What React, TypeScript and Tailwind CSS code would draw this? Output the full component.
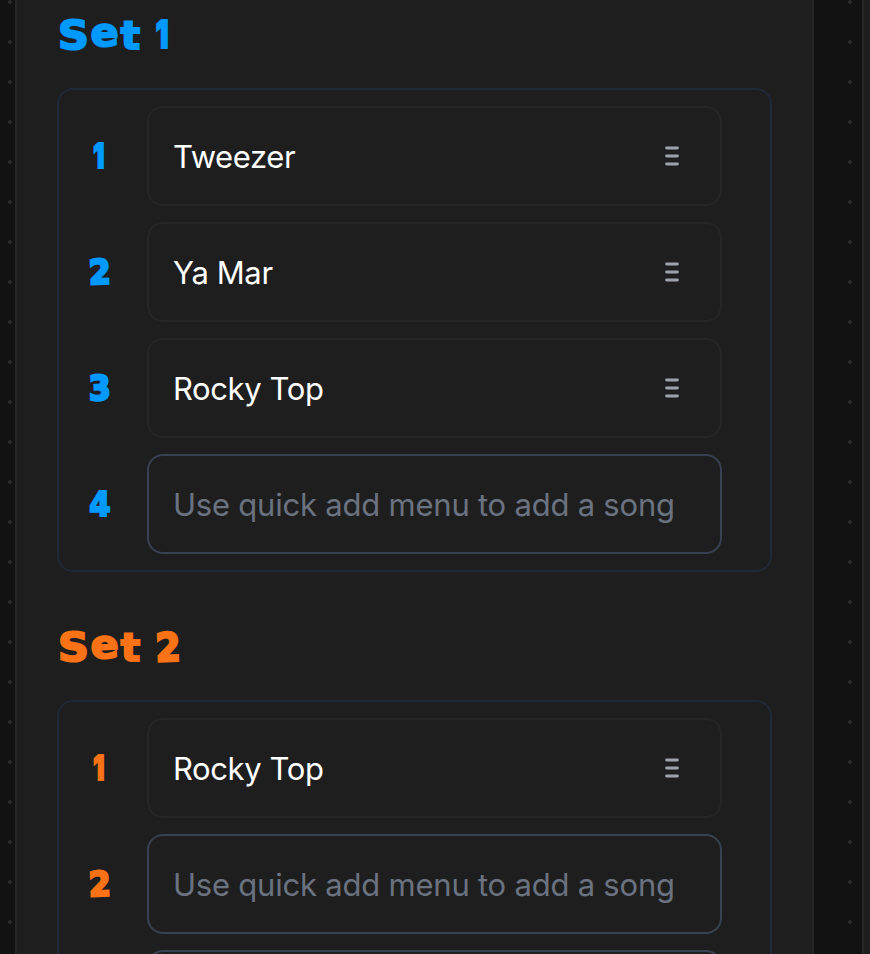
import type { ReactNode } from "react";

const GLYPHS: Record<string, string> = {
  S: "w-[31px] scale-x-[1.1] translate-y-px",
  e: "w-[29px] scale-x-[1.06] -translate-y-[2px] -rotate-2",
  t: "w-[21px] scale-x-[1.04] translate-y-px",
};

const DIGITS: Record<string, string> = {
  "1": "font-[Inter,sans-serif] font-black scale-x-[.72] [-webkit-text-stroke:2px_currentColor]",
  "2": "font-['DejaVu_Sans',sans-serif] font-bold scale-x-[.92] -rotate-2 [-webkit-text-stroke:2.6px_currentColor]",
  "3": "font-['DejaVu_Sans',sans-serif] font-bold scale-x-[.92] -rotate-2 [-webkit-text-stroke:2.6px_currentColor]",
  "4": "font-['DejaVu_Sans',sans-serif] font-bold scale-x-[.9] [-webkit-text-stroke:2.2px_currentColor]",
};

function Heading({ n, color }: { n: string; color: string }) {
  return (
    <h2 aria-label={`Set ${n}`} className={`flex h-[50px] items-center pl-px font-['DejaVu_Sans',sans-serif] text-[39px] leading-[50px] font-bold [-webkit-text-stroke:2px_currentColor] ${color}`}>
      {["S", "e", "t"].map((c) => (
        <span key={c} className={`mr-px flex shrink-0 justify-center ${GLYPHS[c]}`}>{c}</span>
      ))}
      <span className={`flex w-6 justify-center text-[39px] ${n === "1" ? "ml-2 -translate-y-px" : "ml-[14px] translate-y-px"} ${DIGITS[n]}`}>{n}</span>
    </h2>
  );
}

function Row({ n, song, color }: { n: string; song?: string; color: string }) {
  return (
    <div className="flex h-[100px] shrink-0 items-center">
      <div className={`flex w-20 shrink-0 justify-center text-[34px] leading-[48px] ${n === "1" ? "" : "pl-px"} ${color}`}>
        <span className={`inline-block ${DIGITS[n]}`}>{n}</span>
      </div>
      <div className={`ml-2 flex h-[100px] w-[575px] items-center justify-between rounded-2xl border-2 pl-6 pr-10 font-[Inter,sans-serif] text-[31px] ${song ? "border-[#262626] tracking-[-0.4px] text-white" : "border-[#374151] tracking-[-0.22px] text-[#6b7280]"}`}>
        <span className="whitespace-nowrap pt-[3px]">{song ?? "Use quick add menu to add a song"}</span>
        {song && (
          <svg width="16" height="24" viewBox="0 0 16 24" className="shrink-0" stroke="#9ca3af" strokeWidth="2.8" strokeLinecap="round">
            <path d="M2.5 4h11M2.5 12h11M2.5 20h11" />
          </svg>
        )}
      </div>
    </div>
  );
}

function SetList({ n, songs, color, className, children }: { n: string; songs: (string | undefined)[]; color: string; className: string; children?: ReactNode }) {
  return (
    <section className={`flex flex-col gap-7 ${className}`}>
      <Heading n={n} color={color} />
      <div className="flex w-[715px] flex-col gap-4 rounded-2xl border-2 border-[#1f2937] py-4">
        {songs.map((s, i) => (
          <Row key={i} n={String(i + 1)} song={s} color={color} />
        ))}
        {children}
      </div>
    </section>
  );
}

export default function App() {
  return (
    <div className="flex h-[954px] w-[870px] overflow-hidden bg-[#121212] bg-[radial-gradient(circle_at_center,#2b2b2b_2px,transparent_2px)] bg-[length:40px_40px] bg-[position:-10px_-18px]">
      <main className="ml-[15px] h-[954px] w-[799px] shrink-0 overflow-hidden border-x-2 border-[#262626] bg-[#1e1e1e] pt-[10px] pl-10">
        <SetList n="1" songs={["Tweezer", "Ya Mar", "Rocky Top", undefined]} color="text-[#0099ff]" className="" />
        <SetList n="2" songs={["Rocky Top", undefined]} color="text-[#f97316]" className="mt-[50px]">
          <div className="ml-[88px] h-[100px] w-[575px] shrink-0 rounded-2xl border-2 border-[#374151]" />
        </SetList>
      </main>
      <aside className="ml-12 w-2 shrink-0 border-l-2 border-[#262626] bg-[#1e1e1e]" />
    </div>
  );
}
